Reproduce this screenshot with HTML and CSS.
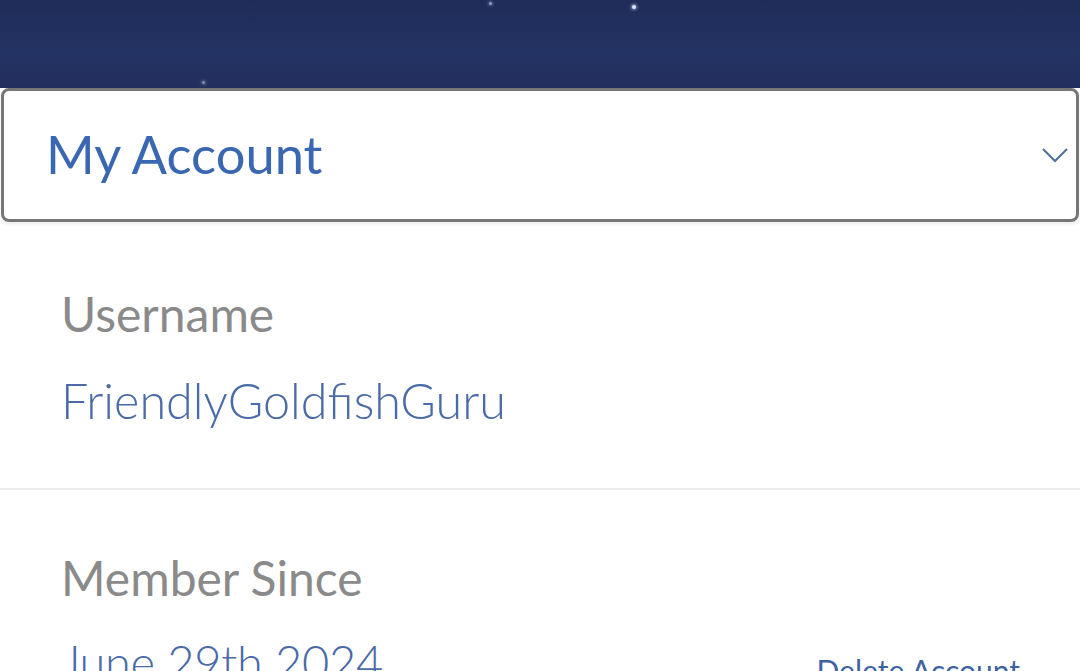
FILE: index.html
```html
<!DOCTYPE html>
<html lang="en">
<head>
<meta charset="utf-8">
<title>My Account</title>
<link rel="stylesheet" href="styles.css">
</head>
<body>
<header class="hero">
  <span class="star s1"></span>
  <span class="star s2"></span>
  <span class="star s3"></span>
</header>
<div class="account-select">
  <span class="account-title">My Account</span>
  <svg class="chevron" width="28" height="16" viewBox="0 0 28 16" aria-hidden="true">
    <path d="M2 2 L14 14 L26 2" fill="none" stroke="#4e6f9c" stroke-width="2"/>
  </svg>
</div>
<main class="details">
  <section class="field">
    <div class="field-label">Username</div>
    <div class="field-value">FriendlyGoldfishGuru</div>
  </section>
  <section class="field field-last">
    <div class="field-label">Member Since</div>
    <div class="field-row">
      <div class="field-value field-date">June 29th 2024</div>
      <a class="delete-link" href="#">Delete Account</a>
    </div>
  </section>
</main>
</body>
</html>
```
FILE: styles.css
```css
html, body {
  margin: 0;
  padding: 0;
  background: #ffffff;
  font-family: Lato, "Open Sans", sans-serif;
  overflow: hidden;
}

.hero {
  position: relative;
  height: 88px;
  background: linear-gradient(180deg, #1f2c5a 0%, #233363 60%, #222f5e 100%);
}

.star {
  position: absolute;
  width: 4px;
  height: 4px;
  border-radius: 50%;
  background: #dfe6f5;
  box-shadow: 0 0 3px 1px rgba(200, 210, 240, 0.6);
}
.s1 { left: 489px; top: 2px; width: 3px; height: 3px; opacity: 0.6; }
.s2 { left: 632px; top: 5px; }
.s3 { left: 202px; top: 81px; width: 3px; height: 3px; opacity: 0.5; }

.account-select {
  display: flex;
  align-items: center;
  justify-content: space-between;
  box-sizing: border-box;
  height: 134px;
  margin: 0 1px;
  padding: 0 7px 0 42px;
  border: 3px solid #767676;
  border-radius: 8px;
  background: #ffffff;
  box-shadow: 0 3px 3px rgba(0, 0, 0, 0.06);
}

.account-title {
  font-size: 52.5px;
  color: #3a67b1;
  line-height: 1;
  padding-bottom: 2px;
}

.details {
  padding: 0;
}

.field {
  padding: 64px 61px 0;
  height: 268px;
  box-sizing: border-box;
  border-bottom: 2px solid #ececec;
}

.field-last {
  border-bottom: none;
  padding-top: 60px;
}

.field-label {
  font-size: 48px;
  color: #8a8a8a;
  line-height: 56px;
}

.field-value {
  margin-top: 30px;
  font-size: 48.5px;
  font-weight: 300;
  color: #4a6aa8;
  line-height: 56px;
}

.field-date {
  margin-top: 28px;
  font-size: 47px;
  letter-spacing: -0.3px;
}

.field-row {
  display: flex;
  justify-content: space-between;
  align-items: flex-end;
}

.delete-link {
  font-size: 30px;
  color: #3f62a3;
  text-decoration: none;
  line-height: 40px;
  margin-right: -1px;
}
```
